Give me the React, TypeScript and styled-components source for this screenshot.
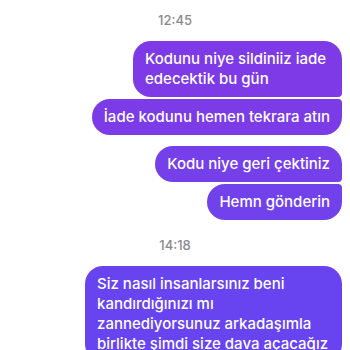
import React from "react";
import styled, { createGlobalStyle } from "styled-components";

const Global = createGlobalStyle`
  html, body { margin: 0; padding: 0; background: #ffffff; }
  body { font-family: Inter, "Noto Sans", "Liberation Sans", sans-serif; -webkit-font-smoothing: antialiased; }
`;

const Screen = styled.div`
  width: 350px;
  height: 350px;
  overflow: hidden;
  display: flex;
  flex-direction: column;
  padding: 12px 8px 0 8px;
  box-sizing: border-box;
`;

const Stamp = styled.div<{ $mt?: number }>`
  align-self: center;
  margin-top: ${(p) => p.$mt ?? 0}px;
  margin-bottom: 13px;
  font-size: 13px;
  line-height: 16px;
  font-weight: 500;
  color: #8a8a8e;
`;

const Group = styled.div<{ $mt?: number }>`
  display: flex;
  flex-direction: column;
  align-items: flex-end;
  gap: 2px;
  margin-top: ${(p) => p.$mt ?? 0}px;
`;

type Pos = "first" | "last" | "single";

const Bubble = styled.div<{ $bg: string; $pos: Pos; $maxw?: number; $w?: number; $pr?: number }>`
  box-sizing: border-box;
  background: ${(p) => p.$bg};
  color: #ffffff;
  font-size: 15px;
  line-height: 20px;
  font-weight: 500;
  padding: 8px ${(p) => p.$pr ?? 12}px 8px 12px;
  max-width: ${(p) => p.$maxw ?? 260}px;
  ${(p) => (p.$w ? `width: ${p.$w}px;` : "")}
  border-radius: ${(p) =>
    p.$pos === "first"
      ? "18px 18px 4px 18px"
      : p.$pos === "last"
      ? "18px 4px 18px 18px"
      : "18px"};
`;

const Line = styled.span`
  display: block;
  white-space: nowrap;
`;

const longLines = [
  "Siz nasıl insanlarsınız beni",
  "kandırdığınızı mı",
  "zannediyorsunuz arkadaşımla",
  "birlikte şimdi size dava açacağız",
];

export default function App() {
  return (
    <>
      <Global />
      <Screen>
        <Stamp>12:45</Stamp>
        <Group>
          <Bubble $bg="#7d3ae6" $pos="first" $maxw={209}>
            Kodunu niye sildiniiz iade edecektik bu gün
          </Bubble>
          <Bubble $bg="#7b3be7" $pos="last">
            İade kodunu hemen tekrara atın
          </Bubble>
        </Group>
        <Group $mt={11}>
          <Bubble $bg="#7540ea" $pos="first">
            Kodu niye geri çektiniz
          </Bubble>
          <Bubble $bg="#7142ec" $pos="last">
            Hemn gönderin
          </Bubble>
        </Group>
        <Stamp $mt={17}>14:18</Stamp>
        <Group>
          <Bubble $bg="#6744f0" $pos="single" $maxw={257} $w={257} $pr={0}>
            {longLines.map((l) => (
              <Line key={l}>{l}</Line>
            ))}
          </Bubble>
        </Group>
      </Screen>
    </>
  );
}
